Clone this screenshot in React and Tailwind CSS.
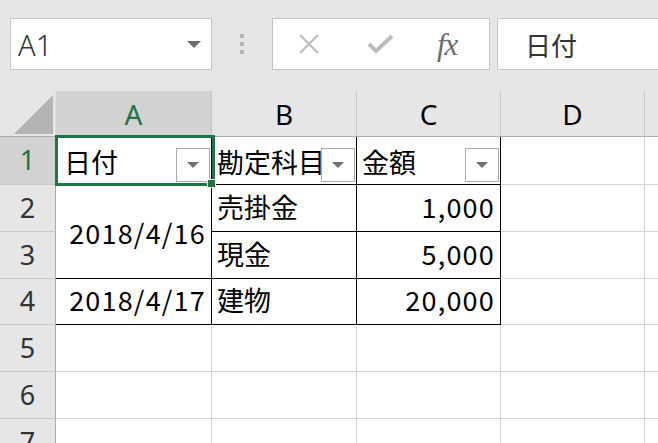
import React from 'react';

const jp = { fontFamily: '"Noto Sans CJK JP", "Noto Sans", sans-serif' };
const ui = { fontFamily: '"Noto Sans", "Open Sans", sans-serif' };

const FilterButton = () => (
  <div className="absolute right-[1px] bottom-[2px] w-[34px] h-[34px] bg-white border border-[#ababab] flex items-center justify-center">
    <svg width="12" height="6" viewBox="0 0 12 6">
      <polygon points="0,0 12,0 6,6" fill="#707070" />
    </svg>
  </div>
);

const rowHeights = [48, 47, 47, 46, 47, 47, 47];

// cell text / number styles
const txt = 'text-[27px] leading-none';
const num = 'text-[27px] leading-none tracking-[1.2px]';

const App = () => {
  return (
    <div className="relative w-[658px] h-[443px] overflow-hidden bg-white text-black" style={jp}>
      {/* Formula bar */}
      <div className="h-[91px] bg-[#e6e6e6] flex items-start pt-[18px] pl-[10px]">
        <div className="w-[202px] h-[52px] bg-white border border-[#c6c6c6] flex items-center justify-between pl-[7px] pr-[10px]">
          <span className="text-[29px] text-[#333] font-light leading-none" style={ui}>A1</span>
          <svg width="14" height="7" viewBox="0 0 14 7">
            <polygon points="0,0 14,0 7,7" fill="#6d6d6d" />
          </svg>
        </div>
        <div className="w-[60px] h-[52px] flex flex-col items-center justify-center gap-[4px]">
          <div className="w-[4px] h-[4px] bg-[#b4b4b4]" />
          <div className="w-[4px] h-[4px] bg-[#b4b4b4]" />
          <div className="w-[4px] h-[4px] bg-[#b4b4b4]" />
        </div>
        <div className="w-[218px] h-[52px] bg-white border border-[#c6c6c6] flex items-center pl-[24px]">
          <svg width="24" height="24" viewBox="0 0 24 24">
            <path d="M3 3 L21 21 M21 3 L3 21" stroke="#bdbdbd" strokeWidth="2.2" fill="none" />
          </svg>
          <svg width="28" height="22" viewBox="0 0 28 22" className="ml-[46px]">
            <path d="M2 11 L9 18 L25 3" stroke="#bdbdbd" strokeWidth="4" fill="none" />
          </svg>
          <span className="ml-[42px] text-[31px] italic text-[#6a6a6a] leading-none tracking-[-1px]" style={{ fontFamily: '"Liberation Serif", serif' }}>fx</span>
        </div>
        <div className="ml-[7px] flex-1 h-[52px] bg-white border-y border-l border-[#c6c6c6] flex items-center pl-[27px]">
          <span className="text-[26px] text-[#333]">日付</span>
        </div>
      </div>

      {/* Column headers */}
      <div className="flex h-[46px] border-b border-[#ababab] bg-[#e6e6e6]">
        <div className="w-[56px] relative shrink-0 border-r border-[#e0e0e0]">
          <svg className="absolute left-[14px] top-[4px]" width="40" height="39" viewBox="0 0 40 39">
            <polygon points="39,0 39,39 0,39" fill="#b4b4b4" />
          </svg>
        </div>
        <div className="w-[156px] shrink-0 bg-[#d2d2d2] border-r border-[#c6c6c6] flex items-center justify-center text-[28px] text-[#217346]" style={ui}>A</div>
        <div className="w-[145px] shrink-0 border-r border-[#c6c6c6] flex items-center justify-center text-[28px]" style={ui}>B</div>
        <div className="w-[144px] shrink-0 border-r border-[#c6c6c6] flex items-center justify-center text-[28px]" style={ui}>C</div>
        <div className="w-[144px] shrink-0 border-r border-[#c6c6c6] flex items-center justify-center text-[28px]" style={ui}>D</div>
        <div className="flex-1" />
      </div>

      {/* Grid */}
      <div className="grid grid-cols-[56px_156px_145px_144px_144px_1fr] grid-rows-[48px_47px_47px_46px_47px_47px_47px]">
        {/* row headers */}
        {rowHeights.map((h, i) => (
          <div
            key={'r' + i}
            className={
              'col-start-1 flex items-center justify-center border-r border-[#ababab] border-b border-b-[#c8c8c8] text-[27px] ' +
              (i === 0 ? 'bg-[#d2d2d2] text-[#217346]' : 'bg-[#e6e6e6] text-[#333]')
            }
            style={{ ...ui, gridRow: i + 1 }}
          >
            {i + 1}
          </div>
        ))}

        {/* row 1 */}
        <div className={'col-start-2 row-start-1 relative border-r border-b border-black flex items-end pl-[8px] pb-[9px] ' + txt}>
          日付
          <FilterButton />
        </div>
        <div className={'col-start-3 row-start-1 relative border-r border-b border-black flex items-end pl-[5px] pb-[9px] overflow-hidden whitespace-nowrap ' + txt}>
          勘定科目
          <FilterButton />
        </div>
        <div className={'col-start-4 row-start-1 relative border-r border-b border-black flex items-end pl-[5px] pb-[9px] ' + txt}>
          金額
          <FilterButton />
        </div>

        {/* rows 2-3 */}
        <div className={'col-start-2 row-start-2 row-span-2 border-r border-b border-black flex items-center justify-end pr-[5px] pt-[2px] ' + num}>
          2018/4/16
        </div>
        <div className={'col-start-3 row-start-2 border-r border-b border-black flex items-end pl-[5px] pb-[11px] ' + txt}>売掛金</div>
        <div className={'col-start-4 row-start-2 border-r border-b border-black flex items-end justify-end pr-[5px] pb-[11px] ' + num}>1,000</div>
        <div className={'col-start-3 row-start-3 border-r border-b border-black flex items-end pl-[5px] pb-[11px] ' + txt}>現金</div>
        <div className={'col-start-4 row-start-3 border-r border-b border-black flex items-end justify-end pr-[5px] pb-[11px] ' + num}>5,000</div>

        {/* row 4 */}
        <div className={'col-start-2 row-start-4 border-r border-b border-black flex items-end justify-end pr-[5px] pb-[11px] ' + num}>2018/4/17</div>
        <div className={'col-start-3 row-start-4 border-r border-b border-black flex items-end pl-[5px] pb-[11px] ' + txt}>建物</div>
        <div className={'col-start-4 row-start-4 border-r border-b border-black flex items-end justify-end pr-[5px] pb-[11px] ' + num}>20,000</div>

        {/* empty cells */}
        {[0, 1, 2, 3].map((i) => (
          <div key={'d' + i} className="col-start-5 border-r border-b border-[#d4d4d4]" style={{ gridRow: i + 1 }} />
        ))}
        {[4, 5, 6].map((i) => (
          <React.Fragment key={'e' + i}>
            <div className="col-start-2 border-r border-b border-[#d4d4d4]" style={{ gridRow: i + 1 }} />
            <div className="col-start-3 border-r border-b border-[#d4d4d4]" style={{ gridRow: i + 1 }} />
            <div className="col-start-4 border-r border-b border-[#d4d4d4]" style={{ gridRow: i + 1 }} />
            <div className="col-start-5 border-r border-b border-[#d4d4d4]" style={{ gridRow: i + 1 }} />
          </React.Fragment>
        ))}
        {rowHeights.map((h, i) => (
          <div key={'f' + i} className="col-start-6 border-b border-[#d4d4d4]" style={{ gridRow: i + 1 }} />
        ))}
      </div>

      {/* Active cell selection */}
      <div className="absolute left-[55px] top-[135px] w-[160px] h-[51px] border-[3px] border-[#217346] pointer-events-none" />
      <div className="absolute left-[207px] top-[179px] w-[9px] h-[9px] bg-[#217346] border border-white pointer-events-none" />
    </div>
  );
};

export default App;
